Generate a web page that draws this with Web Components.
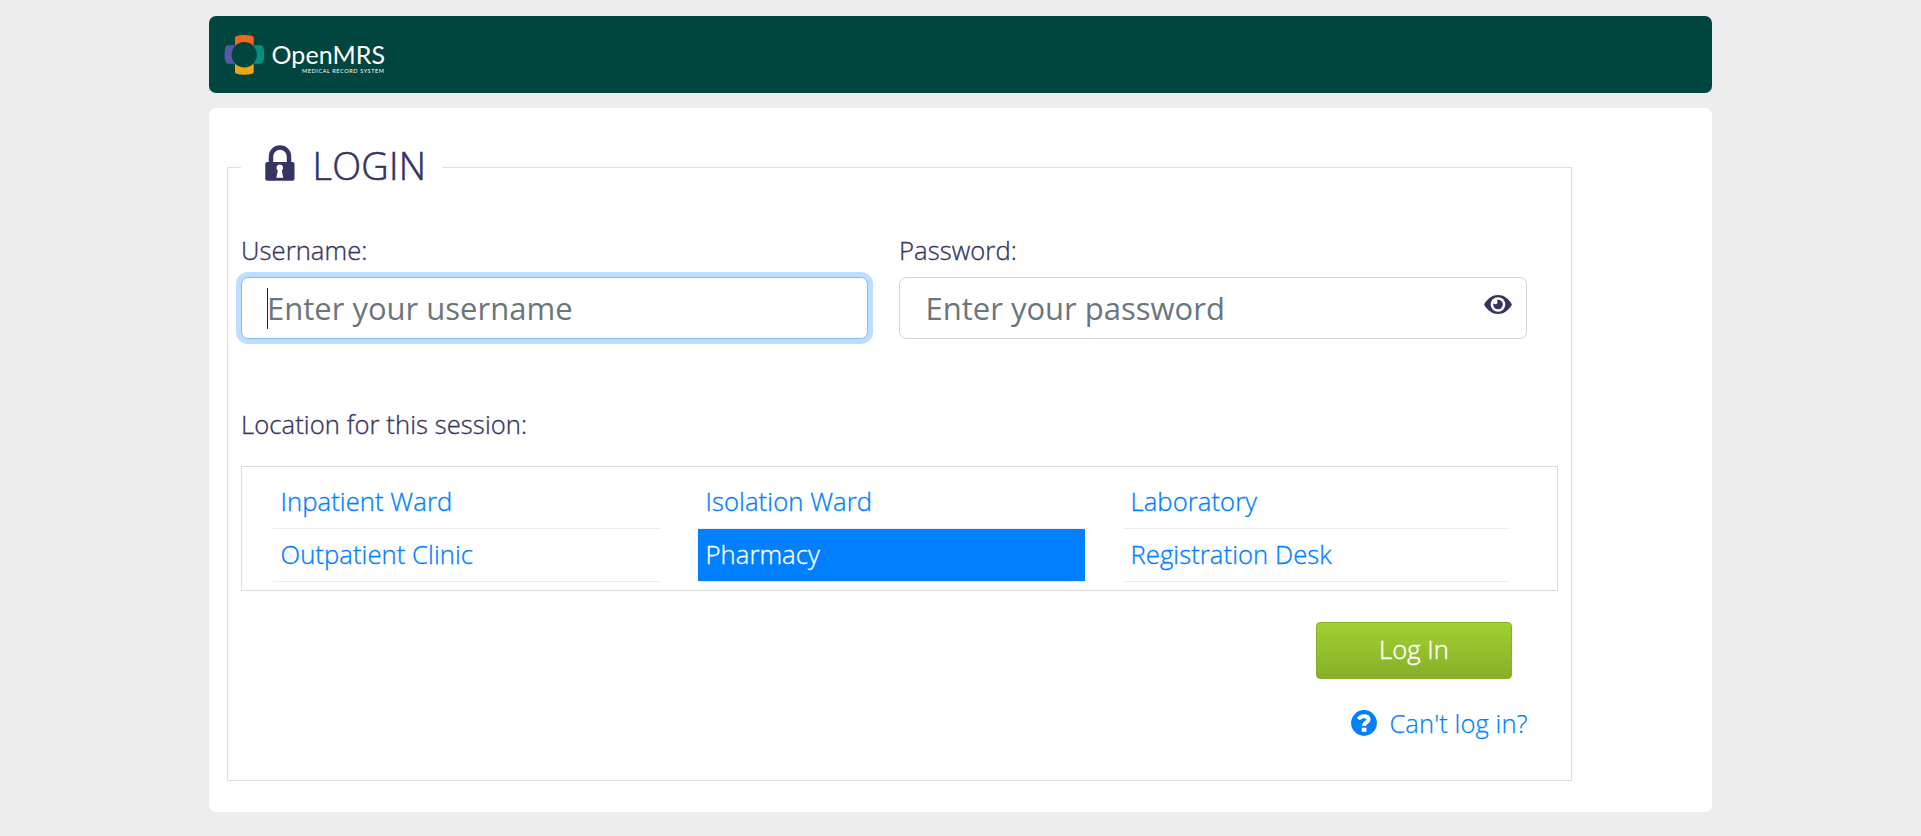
<!DOCTYPE html>
<html lang="en">
<head>
<meta charset="utf-8">
<title>Login</title>
<style>
html,body{margin:0;height:100%;background:#ededed}
body{font-family:"Open Sans","Noto Sans",sans-serif;font-weight:300;font-size:25.6px;line-height:38px;letter-spacing:.08px;color:#363463;-webkit-text-stroke:.35px currentColor}
</style>
</head>
<body>
<login-page></login-page>
<script>
function define(name, html) {
  const t = document.createElement('template');
  t.innerHTML = html;
  customElements.define(name, class extends HTMLElement {
    constructor() {
      super();
      this.attachShadow({mode: 'open'}).appendChild(t.content.cloneNode(true));
    }
  });
}

define('app-header', `
<style>
:host{display:flex;height:77px;background:#00463f;border-radius:7px;letter-spacing:0;-webkit-text-stroke:0}
svg{display:block}
text{font-family:Lato,sans-serif;fill:#fff}
</style>
<svg width="200" height="77" viewBox="0 0 200 77">
  <path fill="#f26522" d="M26 37V21.500Q26 19 35.300 19Q44.700 19 44.700 21.500V37Z"/>
  <path fill="#eea616" d="M26 40V56Q26 58.700 35.300 58.700Q44.700 58.700 44.700 56V40Z"/>
  <path fill="#5b57a6" d="M34 29.300H19Q15.500 29.300 15.500 38.500Q15.500 47.700 19 47.700H34Z"/>
  <path fill="#009384" d="M36 29.300H51.500Q55.200 29.300 55.200 38.500Q55.200 47.700 51.500 47.700H36Z"/>
  <circle cx="35.300" cy="38.700" r="12.700" fill="#00463f"/>
  <text x="62.500" y="47.500" font-size="25" font-weight="400" textLength="113.500">OpenMRS</text>
  <text x="93" y="57" font-size="5.600" font-weight="400" textLength="82">MEDICAL RECORD SYSTEM</text>
</svg>`);

define('text-field', `
<style>
:host{display:flex;flex-direction:column;width:628px}
:host([focused]){width:627px;margin-right:1px}
label{height:38px;margin-bottom:7px}
.box{box-sizing:border-box;height:62px;border:1px solid #ced4da;border-radius:7px;background:#fff;display:flex;align-items:center;padding:0 14px 0 25.500px;font-size:31px;font-weight:400;letter-spacing:0;-webkit-text-stroke:0;color:#6c757d;line-height:48px}
:host([focused]) .box{padding-left:25px;border-color:#80bdff;box-shadow:0 0 0 5px #bfdeff}
.caret{display:none;width:1px;height:41px;background:#222;margin-right:-1px}
:host([focused]) .caret{display:block}
.hint{flex:1;white-space:nowrap}
</style>
<label><slot name="label"></slot></label>
<div class="box"><span class="caret"></span><span class="hint"><slot></slot></span><slot name="icon"></slot></div>`);

define('eye-icon', `
<style>:host{display:block;width:28px;height:19px;margin-bottom:7px}svg{display:block}</style>
<svg width="28" height="19" viewBox="0 0 28 19">
  <path fill="#363463" d="M0 9.500C3.500 3.300 8.500 0 14 0S24.500 3.300 28 9.500C24.500 15.700 19.500 19 14 19S3.500 15.700 0 9.500Z"/>
  <circle cx="14" cy="9.500" r="7.300" fill="#fff"/>
  <circle cx="14" cy="9.500" r="4.800" fill="#363463"/>
  <circle cx="11.300" cy="6.900" r="2.300" fill="#fff"/>
</svg>`);

define('location-item', `
<style>
:host{display:block;box-sizing:border-box;height:53px;border-bottom:1px solid #eee;padding:7px 7.500px 0;color:#007fff;-webkit-text-stroke:.35px #007fff;white-space:nowrap}
:host([selected]){background:#007fff;background-clip:padding-box;color:#fff;-webkit-text-stroke-color:#fff}
</style><slot></slot>`);

define('location-list', `
<style>
:host{display:grid;box-sizing:border-box;height:125px;width:1317px;border:1px solid #ddd;padding:9px 31px 0;grid-template-columns:repeat(3,387px);column-gap:38px;align-content:start}
</style><slot></slot>`);

define('submit-button', `
<style>
:host{display:flex;box-sizing:border-box;width:196px;height:57px;align-items:center;justify-content:center;border:1px solid #88af28;border-radius:4px;background:linear-gradient(#9fd130,#88af28);color:#fff;-webkit-text-stroke:.45px #fff;padding-bottom:1px}
</style><slot></slot>`);

define('help-link', `
<style>
:host{display:flex;align-items:center;color:#007fff;-webkit-text-stroke:.25px #007fff;height:38px}
svg{display:block;margin:-3px 12.500px 0 0}
</style>
<svg width="26" height="26" viewBox="0 0 26 26">
  <circle cx="13" cy="13" r="12.900" fill="#007fff"/>
  <path fill="none" stroke="#fff" stroke-width="4" d="M7.300 9.200C8.600 7.300 10.500 6.200 13 6.200C15.800 6.200 17.500 7.300 17.500 9.400C17.500 12.500 13 12 13 16"/>
  <rect x="10.700" y="17.700" width="4.800" height="4.100" fill="#fff"/>
</svg><slot></slot>`);

define('login-legend', `
<style>
:host{display:flex;box-sizing:border-box;height:52px;width:201px;padding-left:24px;background:#fff;font-size:37.800px;letter-spacing:.3px;-webkit-text-stroke:.6px #363463;line-height:48px;align-items:flex-start}
svg{display:block;margin:2.500px 17.500px 0 0}
</style>
<svg width="30" height="36" viewBox="0 0 30 36">
  <path fill="none" stroke="#363463" stroke-width="4.500" d="M6 18V11.500a9 9 0 0 1 18 0V18"/>
  <rect x=".3" y="17" width="29.200" height="18.700" rx="2" fill="#363463"/>
  <path fill="#fff" d="M14.800 19.500a3.400 3.400 0 0 1 2 6.100L18.300 32.700H11.300L12.800 25.600a3.400 3.400 0 0 1 2-6.100Z"/>
</svg><span><slot></slot></span>`);

define('login-page', `
<style>
:host{display:flex;flex-direction:column;width:1503px;margin-left:209px;padding-top:16px;gap:15px}
main{box-sizing:border-box;height:704px;background:#fff;border-radius:7px;padding:59px 18px 0}
.set{box-sizing:border-box;width:1345px;height:614px;border:1px solid #dee0e4;padding:0 13px;display:flex;flex-direction:column}
login-legend{margin-top:-26px}
.row{display:flex;gap:30px;margin-top:38px}
.loc{margin-top:67px;height:38px}
location-list{margin-top:22px}
.end{display:flex;justify-content:flex-end}
submit-button{margin:31px 46px 0 0}
help-link{margin:26px 30.500px 0 0}
</style>
<app-header></app-header>
<main><div class="set">
  <login-legend>LOGIN</login-legend>
  <div class="row">
    <text-field focused><span slot="label">Username:</span>Enter your username</text-field>
    <text-field><span slot="label">Password:</span>Enter your password<eye-icon slot="icon"></eye-icon></text-field>
  </div>
  <div class="loc">Location for this session:</div>
  <location-list>
    <location-item>Inpatient Ward</location-item><location-item>Isolation Ward</location-item><location-item>Laboratory</location-item>
    <location-item>Outpatient Clinic</location-item><location-item selected>Pharmacy</location-item><location-item>Registration Desk</location-item>
  </location-list>
  <div class="end"><submit-button>Log In</submit-button></div>
  <div class="end"><help-link>Can't log in?</help-link></div>
</div></main>`);
</script>
</body>
</html>
